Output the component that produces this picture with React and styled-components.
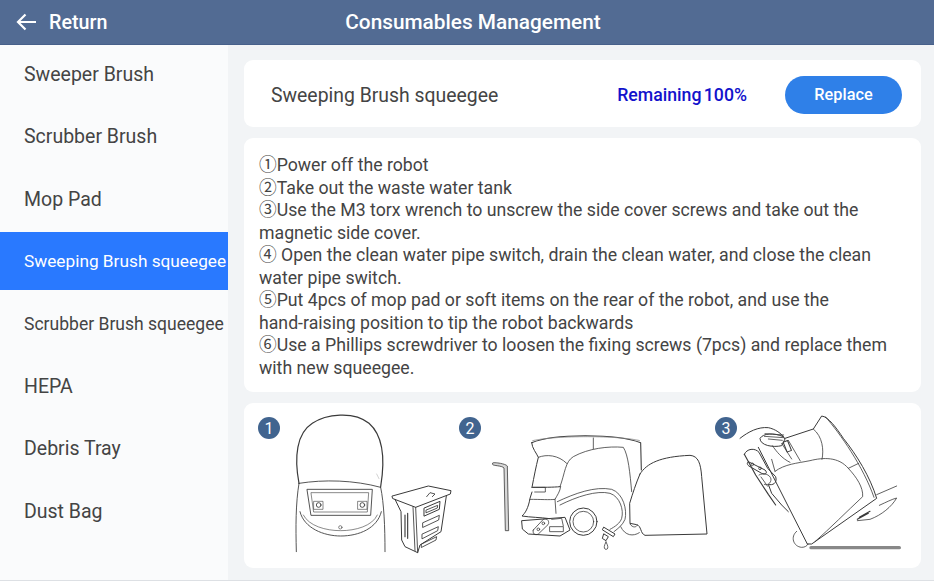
import styled, { createGlobalStyle } from 'styled-components'

const GlobalStyle = createGlobalStyle`
    html, body {
        margin: 0;
        padding: 0;
        background: #F2F4F6;
    }
    body {
        font-family: Roboto, "Noto Sans CJK SC", sans-serif;
    }
`

const Page = styled.div`
    width: 934px;
    height: 581px;
    display: flex;
    flex-direction: column;
    overflow: hidden;
    background: #F2F4F6;
    border-bottom: 1px solid #DDE0E4;
    box-sizing: border-box;
`

const Header = styled.header`
    height: 45px;
    flex: none;
    position: relative;
    display: flex;
    align-items: center;
    justify-content: center;
    padding-left: 12px;
    background: #526B93;
    color: #FFFFFF;
    border-bottom: 1px solid #47608A;
    box-sizing: border-box;
`

const ReturnButton = styled.div`
    position: absolute;
    left: 16px;
    top: 0;
    height: 44px;
    display: flex;
    align-items: center;
    gap: 12px;
    font-size: 19.7px;
    font-weight: 500;
`

const HeaderTitle = styled.h1`
    margin: 0;
    font-size: 20.8px;
    font-weight: 500;
`

const Body = styled.div`
    flex: 1;
    display: flex;
    min-height: 0;
`

const Sidebar = styled.nav`
    width: 228px;
    flex: none;
    display: flex;
    flex-direction: column;
    gap: 4.4px;
    background: #FAFBFC;
`

const SideItem = styled.div`
    height: 58px;
    flex: none;
    display: flex;
    align-items: center;
    padding: ${props => (props.$size ? '0' : '1px')} 0 0 24px;
    box-sizing: border-box;
    font-size: ${props => props.$size || 19.5}px;
    white-space: nowrap;
    color: ${props => (props.$active ? '#FFFFFF' : '#444444')};
    background: ${props => (props.$active ? '#2979FF' : 'transparent')};
`

const Main = styled.main`
    flex: 1;
    display: flex;
    flex-direction: column;
    gap: 11px;
    padding: 15px 13px 12px 16px;
    min-width: 0;
`

const Card = styled.section`
    background: #FFFFFF;
    border-radius: 9px;
`

const StatusCard = styled(Card)`
    height: 67px;
    flex: none;
    display: flex;
    align-items: center;
    padding: 2px 19px 0 27px;
    box-sizing: border-box;
`

const StatusTitle = styled.div`
    flex: 1;
    padding-top: 1px;
    font-size: 19.4px;
    color: #444444;
`

const Remaining = styled.div`
    font-size: 17.7px;
    font-weight: 500;
    word-spacing: -2px;
    color: #1212CC;
    margin-right: 38px;
`

const ReplaceButton = styled.button`
    width: 117px;
    height: 38px;
    border: none;
    border-radius: 20px;
    background: #2F80E8;
    color: #FFFFFF;
    font-family: inherit;
    font-size: 16.3px;
    font-weight: 500;
`

const StepsCard = styled(Card)`
    height: 254px;
    flex: none;
    padding: 16px 15px 0;
    box-sizing: border-box;
    font-size: 17.7px;
    line-height: 22.55px;
    color: #444444;
`

const Step = styled.div``

const NoBreak = styled.span`
    white-space: nowrap;
`

const FiguresCard = styled(Card)`
    flex: 1;
    display: flex;
    padding-left: 14px;
    min-height: 0;
`

const Figure = styled.div`
    width: ${props => props.$width}px;
    flex: none;
    display: flex;
    align-items: flex-start;
`

const Badge = styled.div`
    width: 22px;
    height: 22px;
    flex: none;
    margin-top: 14px;
    border-radius: 50%;
    display: flex;
    align-items: center;
    justify-content: center;
    background: #41648F;
    color: #FFFFFF;
    font-size: 16px;
`

const Drawing = styled.svg`
    flex: 1;
    height: 165px;
    display: block;
    fill: none;
    stroke: #3A3A3A;
    stroke-width: ${props => props.$stroke || 2.6};
    stroke-linecap: round;
    stroke-linejoin: round;
`

const menu = [
    { label: 'Sweeper Brush' },
    { label: 'Scrubber Brush' },
    { label: 'Mop Pad' },
    { label: 'Sweeping Brush squeegee', size: 17.25, active: true },
    { label: 'Scrubber Brush squeegee', size: 17.55 },
    { label: 'HEPA' },
    { label: 'Debris Tray' },
    { label: 'Dust Bag' },
]

const steps = [
    { id: 1, text: '①Power off the robot' },
    { id: 2, text: '②Take out the waste water tank' },
    { id: 3, text: '③Use the M3 torx wrench to unscrew the side cover screws and take out the magnetic side cover.' },
    { id: 4, text: '④ Open the clean water pipe switch, drain the clean water, and close the clean water pipe switch.' },
    {
        id: 5,
        text: (
            <>
                ⑤Put 4pcs of mop pad or soft items on the rear of the robot, and use the <NoBreak>hand-raising</NoBreak> position to tip the robot backwards
            </>
        ),
    },
    { id: 6, text: '⑥Use a Phillips screwdriver to loosen the fixing screws (7pcs) and replace them with new squeegee.' },
]

// the svg coordinates are 3x page pixels, stroke 3 = 1px
const RobotBack = () => (
    <Drawing viewBox="108 9 537 495">
        <path d="M165 250 C150 170 158 100 205 70 C245 42 330 32 375 70 C415 105 425 170 410 260" strokeWidth="3.6" />
        <path d="M165 250 C240 238 330 240 410 262" />
        <path d="M157 455 C155 380 155 310 165 250" />
        <path d="M423 455 C423 380 420 310 410 262" />
        <path d="M168 335 C180 385 240 408 290 408 C345 408 400 385 412 335" />
        <path d="M178 345 C195 378 245 392 290 392 C335 392 385 378 400 345" strokeWidth="1.8" />
        <path d="M190 268 H385 L380 346 H202 Z" />
        <path d="M202 278 H374 L370 336 H210 Z" strokeWidth="1.8" />
        <rect x="210" y="304" width="27" height="24" strokeWidth="1.8" />
        <rect x="342" y="304" width="27" height="24" strokeWidth="1.8" />
        <circle cx="224" cy="315" r="7" />
        <circle cx="355" cy="315" r="7" />
        <circle cx="289" cy="382" r="5" strokeWidth="1.8" />
        <path d="M398 222 L405 236" stroke="#BBBBBB" strokeWidth="2" />
        {/* waste water tank */}
        <g transform="translate(423 240)">
            <path d="M22 48 L130 18 L198 32 L196 42 L92 82 L24 56 Z" strokeWidth="3" />
            <path d="M125 50 L135 38 L150 42 L142 50" />
            <path d="M30 58 L48 95 L50 180 L60 200 L98 218 L105 195 L168 155 L184 48" strokeWidth="3" />
            <path d="M92 82 L98 218 M84 80 L90 212" />
            <path d="M60 105 V170 M68 100 V175" strokeWidth="3.4" />
            <path d="M118 84 L165 64 L163 88 L118 108 Z" strokeWidth="3" />
            <path d="M124 90 L158 76 L157 84 L124 98 Z" />
            <path d="M114 128 L163 106 L161 120 L114 142 Z M112 162 L160 140 L158 152 L112 176 Z M110 192 L155 170 L153 180 L110 202 Z" />
        </g>
    </Drawing>
)

const RobotSide = () => (
    <Drawing viewBox="93 9 702 495" $stroke={2.4}>
        <path d="M128 188 C128 186 165 190 172 198 L176 392 L166 392 L162 204 C155 196 130 198 128 194 Z" fill="#D8D8D8" />
        {/* robot body */}
        <g transform="translate(210 90)">
            <path d="M35 38 C100 10 290 10 362 38 L364 120" strokeWidth="3.2" />
            <path d="M38 32 C110 16 290 16 360 32" stroke="#888888" strokeDasharray="2 2" />
            <path d="M220 24 V56" />
            <path d="M35 38 C36 55 50 70 55 82 C48 110 42 140 36 172" strokeWidth="3" />
            <path d="M55 82 C80 72 115 75 140 100" />
            <path d="M120 170 C135 130 135 95 160 80 C205 55 265 48 310 52 C325 75 330 130 335 185" />
            <path d="M36 172 C70 172 100 172 120 170" strokeWidth="3" />
            <path d="M40 172 H76 V186 H44" />
            <path d="M36 186 L30 205 C25 235 15 250 6 258 C30 262 60 262 90 266" strokeWidth="3" />
            <path d="M30 208 C60 208 90 210 105 208 C112 195 120 185 122 170" />
            <path d="M105 208 L108 250" />
            <path d="M120 225 C170 200 230 180 270 190 C300 200 312 240 305 265 C300 280 285 290 270 298" />
            <path d="M112 215 C165 190 225 168 275 178 C310 190 322 240 315 268 C308 285 295 295 282 305" />
            <circle cx="190" cy="275" r="41" strokeWidth="3" />
            <circle cx="190" cy="275" r="31" />
            <path d="M6 272 L135 262 L150 300 L120 318 L25 312 L8 298 Z" strokeWidth="3" />
            <path d="M40 300 L70 268 C82 262 90 276 84 284 L55 312 C45 318 36 310 40 300 Z" />
            <circle cx="55" cy="298" r="4" />
            <circle cx="70" cy="280" r="4" />
            <path d="M90 290 H130 V305 H90 Z M95 268 L125 265 L130 288" />
            <path d="M252 292 L285 312 L280 320 L248 300 Z M252 312 L265 320 L258 332 L248 326 Z" strokeWidth="3" />
            <path d="M258 336 C250 350 252 358 258 358 C265 358 266 350 258 336 Z" />
            <path d="M302 290 C315 318 340 320 358 308 M330 282 C338 295 350 292 352 285" />
        </g>
        {/* side cover */}
        <path d="M570 222 C590 190 630 170 720 166 C745 168 752 190 755 230 L771 402 L585 406 C570 400 575 378 560 374 L540 370 L539 310 C548 280 558 250 570 222 Z" strokeWidth="3" />
    </Drawing>
)

const RobotTilted = () => (
    <Drawing viewBox="111 9 519 495" $stroke={2.4}>
        <path d="M255 115 L340 87 L365 48 C385 50 410 85 430 115 C470 165 510 230 530 295 L335 432 L322 432" strokeWidth="3" />
        <path d="M376 50 C420 100 490 200 522 292" />
        <path d="M340 87 C368 110 372 150 366 178" />
        <path d="M225 214 C255 192 290 190 330 182 C370 172 415 170 445 205 C470 232 490 262 488 290 C440 335 390 385 345 425" />
        <path d="M445 205 L476 190" />
        <path d="M225 214 L215 178" />
        <path d="M175 142 L322 432" strokeWidth="3" />
        {/* hand and pull tab */}
        <g transform="translate(105 45)">
            <path d="M15 70 C40 50 70 35 100 38 C120 42 140 55 150 72 L140 92 C115 98 75 92 75 70 C85 55 115 52 145 65" strokeWidth="3" />
            <path d="M90 56 L146 60 M88 64 L146 68 M100 72 L142 76" />
            <path d="M112 92 C125 110 140 130 165 142 M140 85 L170 132 M160 76 L196 138" />
            <rect x="150" y="78" width="14" height="32" transform="rotate(-22 157 94)" strokeWidth="3" />
            <path d="M28 118 C35 100 60 98 72 112 L98 160 L122 185 C128 205 112 212 100 208 L110 235 L140 270 L160 290" strokeWidth="3" />
            <path d="M28 118 L62 180 L100 238 L122 270" strokeWidth="3.4" />
            <path d="M40 140 L90 165 C100 175 90 180 80 175 L45 155 C35 150 35 142 40 140 Z" strokeWidth="3" />
            <circle cx="52" cy="148" r="4" />
            <circle cx="75" cy="160" r="4" />
            <path d="M72 180 C85 172 105 178 108 192 C108 205 98 212 88 208 M78 186 L98 214" />
        </g>
        <path d="M290 394 C270 410 280 440 305 442 C315 442 320 438 325 432" />
        <path d="M333 443 H598" stroke="#888888" strokeWidth="10" />
        <path d="M530 284 L590 258 M538 316 C560 306 575 298 590 294 C575 320 545 345 510 358 L472 362" />
        <path d="M472 358 L505 340 M478 352 L510 334" strokeWidth="3.5" />
    </Drawing>
)

const figures = [
    { number: 1, width: 201, drawing: <RobotBack /> },
    { number: 2, width: 256, drawing: <RobotSide /> },
    { number: 3, width: 195, drawing: <RobotTilted /> },
]

const App = () => {
    return (
        <Page>
            <GlobalStyle />
            <Header>
                <ReturnButton>
                    <svg width="21" height="18" viewBox="0 0 21 18" fill="none" stroke="#FFFFFF" strokeWidth="2.2">
                        <path d="M20 9 H2 M9.5 1.5 L2 9 L9.5 16.5" />
                    </svg>
                    Return
                </ReturnButton>
                <HeaderTitle>Consumables Management</HeaderTitle>
            </Header>
            <Body>
                <Sidebar>
                    {menu.map(item => (
                        <SideItem key={item.label} $active={item.active} $size={item.size}>
                            {item.label}
                        </SideItem>
                    ))}
                </Sidebar>
                <Main>
                    <StatusCard>
                        <StatusTitle>Sweeping Brush squeegee</StatusTitle>
                        <Remaining>Remaining 100%</Remaining>
                        <ReplaceButton>Replace</ReplaceButton>
                    </StatusCard>
                    <StepsCard>
                        {steps.map(step => (
                            <Step key={step.id}>{step.text}</Step>
                        ))}
                    </StepsCard>
                    <FiguresCard>
                        {figures.map(figure => (
                            <Figure key={figure.number} $width={figure.width}>
                                <Badge>{figure.number}</Badge>
                                {figure.drawing}
                            </Figure>
                        ))}
                    </FiguresCard>
                </Main>
            </Body>
        </Page>
    )
}

export default App
